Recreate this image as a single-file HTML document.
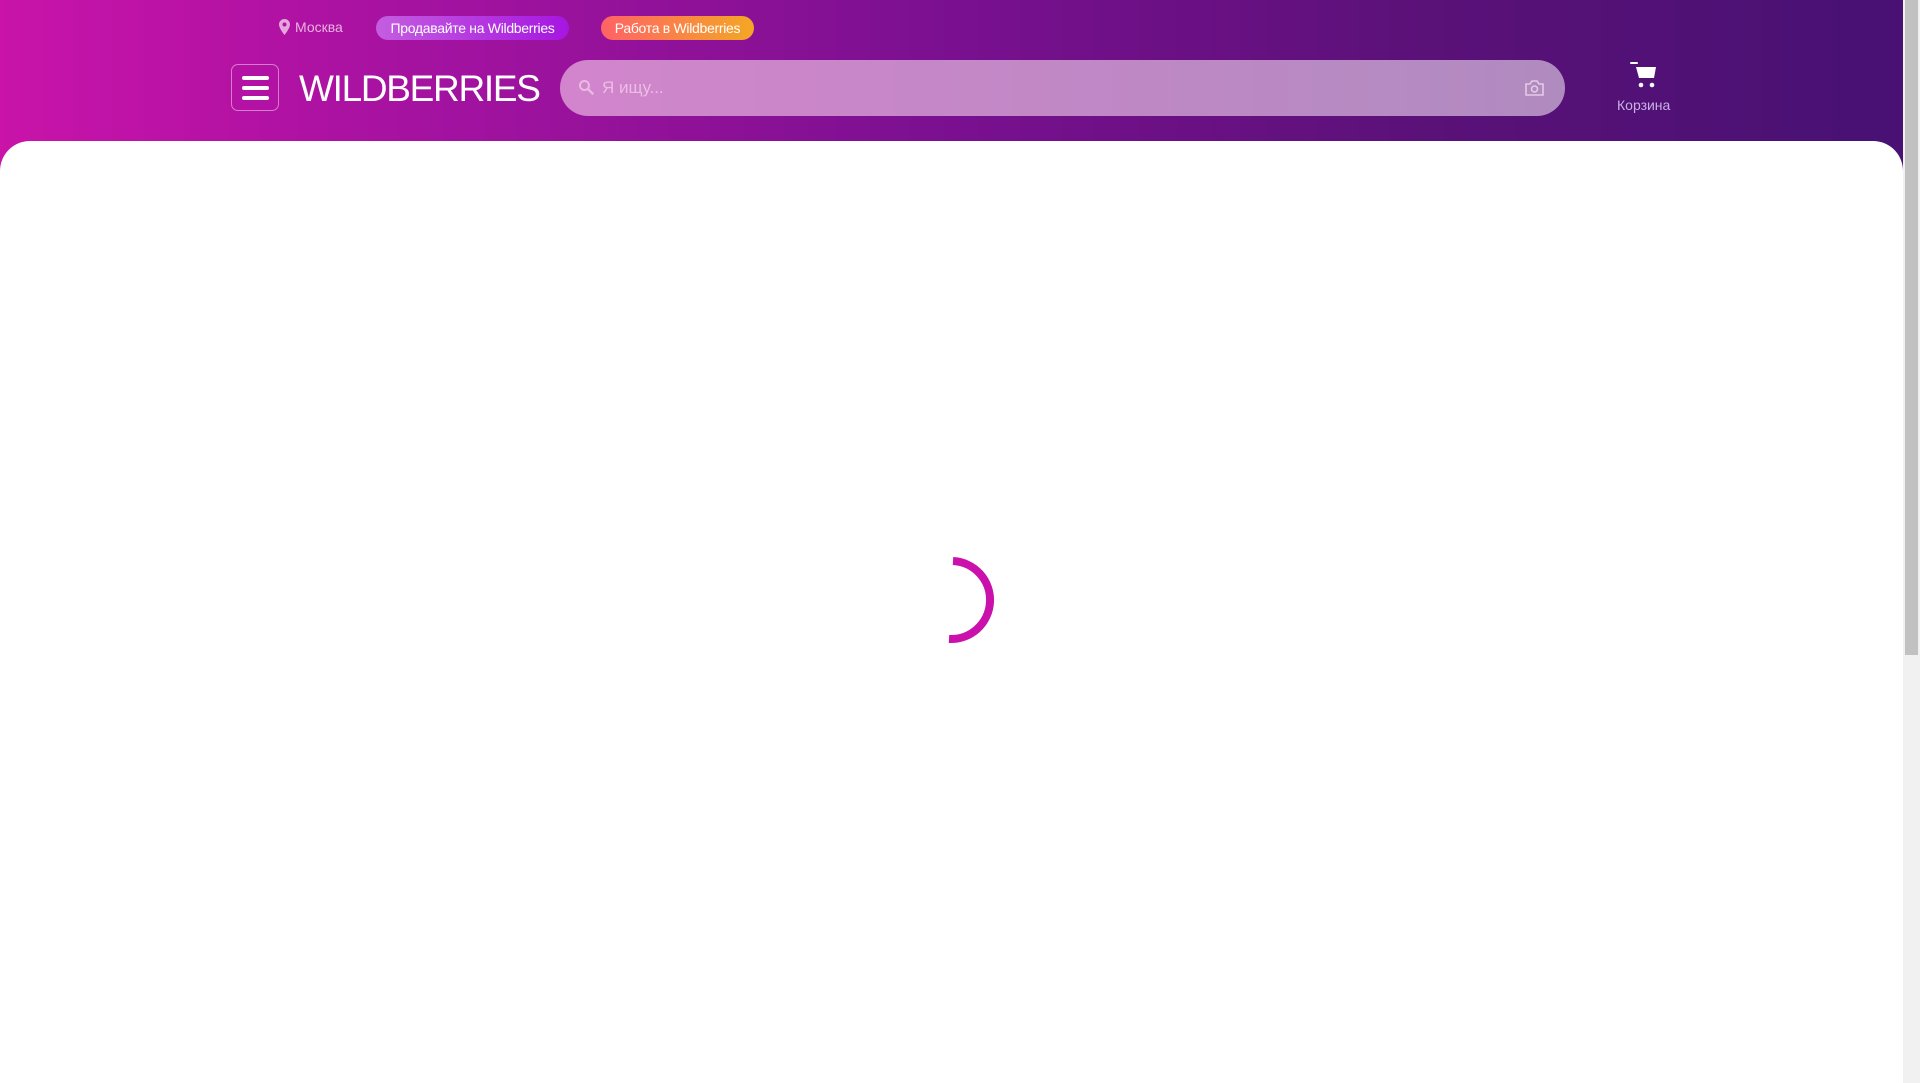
<!DOCTYPE html>
<html><head><meta charset="utf-8"><style>
html,body{margin:0;padding:0;width:1920px;height:1083px;overflow:hidden;font-family:"Liberation Sans",sans-serif;background:#fff}
.hdr{position:absolute;left:0;top:0;width:1903px;height:170px;background:linear-gradient(90deg,#c913a9 0%,#a0129f 25%,#7a1090 50%,#5a1178 75%,#481173 100%)}
.main{position:absolute;left:0;top:141px;width:1903px;height:942px;background:#fff;border-radius:30px 30px 0 0}
.sb{position:absolute;left:1903px;top:0;width:17px;height:1083px;background:#f1f1f1}
.thumb{position:absolute;left:1905px;top:0;width:13px;height:655px;background:#c1c1c1}
.t{position:absolute;color:#fff;white-space:nowrap}
.btn{position:absolute;top:16px;height:24px;border-radius:12px;color:#fff;font-size:14px;line-height:24px;text-align:center;white-space:nowrap;letter-spacing:-0.3px}
</style></head><body>
<div class="hdr"></div>
<svg style="position:absolute;left:279px;top:19px" width="11" height="16" viewBox="0 0 11 16"><path d="M5.5 0C2.5 0 0 2.4 0 5.4 0 9.5 5.5 16 5.5 16S11 9.5 11 5.4C11 2.4 8.5 0 5.5 0zm0 7.5a2 2 0 1 1 0-4 2 2 0 0 1 0 4z" fill="#e4a6dc"/></svg>
<div class="t" style="left:295px;top:19px;font-size:14px;color:#e8b2e0">Москва</div>
<div class="btn" style="left:376px;width:193px;background:linear-gradient(90deg,#c45ee0,#a616e0)">Продавайте на Wildberries</div>
<div class="btn" style="left:601px;width:153px;background:linear-gradient(90deg,#ff6266,#f3a724)">Работа в Wildberries</div>
<div style="position:absolute;left:231px;top:64px;width:48px;height:47px;box-sizing:border-box;border:1px solid rgba(255,255,255,.45);border-radius:7px"></div>
<div style="position:absolute;left:242px;top:76px;width:27px;height:4px;background:#fff;border-radius:2px"></div>
<div style="position:absolute;left:242px;top:86px;width:27px;height:4px;background:#fff;border-radius:2px"></div>
<div style="position:absolute;left:242px;top:96px;width:27px;height:4px;background:#fff;border-radius:2px"></div>
<div class="t" style="left:299px;top:68px;font-size:37px;letter-spacing:-1.3px">WILDBERRIES</div>
<div style="position:absolute;left:560px;top:60px;width:1005px;height:56px;border-radius:28px;background:linear-gradient(90deg,#d285cc,#b08bc0)"></div>
<svg style="position:absolute;left:578px;top:79px" width="16" height="16" viewBox="0 0 16 16"><circle cx="6.5" cy="6.5" r="4.5" fill="none" stroke="#eab9e4" stroke-width="2"/><path d="M10 10l4.5 4.5" stroke="#eab9e4" stroke-width="2.4" stroke-linecap="round"/></svg>
<div class="t" style="left:602px;top:78px;font-size:17px;color:#ecbde6">Я ищу...</div>
<svg style="position:absolute;left:1525px;top:80px" width="19" height="16" viewBox="0 0 19 16"><path d="M1 4h4l2-3h5l2 3h4v11H1z" fill="none" stroke="#e3cbe6" stroke-width="1.6"/><circle cx="9.5" cy="9" r="3" fill="none" stroke="#e3cbe6" stroke-width="1.6"/></svg>
<svg style="position:absolute;left:1630px;top:62px" width="30" height="26" viewBox="0 0 30 26"><path d="M1 1h6" stroke="#fff" stroke-width="2" stroke-linecap="round"/><path d="M6 5h20l-2 11H9z" fill="#fff"/><circle cx="11" cy="23" r="2.3" fill="#fff"/><circle cx="22" cy="23" r="2.3" fill="#fff"/></svg>
<div class="t" style="left:1617px;top:97px;font-size:14px;color:#c9b0e4">Корзина</div>
<div class="main"></div>
<svg style="position:absolute;left:905px;top:555px" width="90" height="90" viewBox="0 0 90 90"><path d="M48 6A39 39 0 0 1 44 84" fill="none" stroke="#cb11ab" stroke-width="8"/></svg>
<div class="sb"></div><div class="thumb"></div>
</body></html>
